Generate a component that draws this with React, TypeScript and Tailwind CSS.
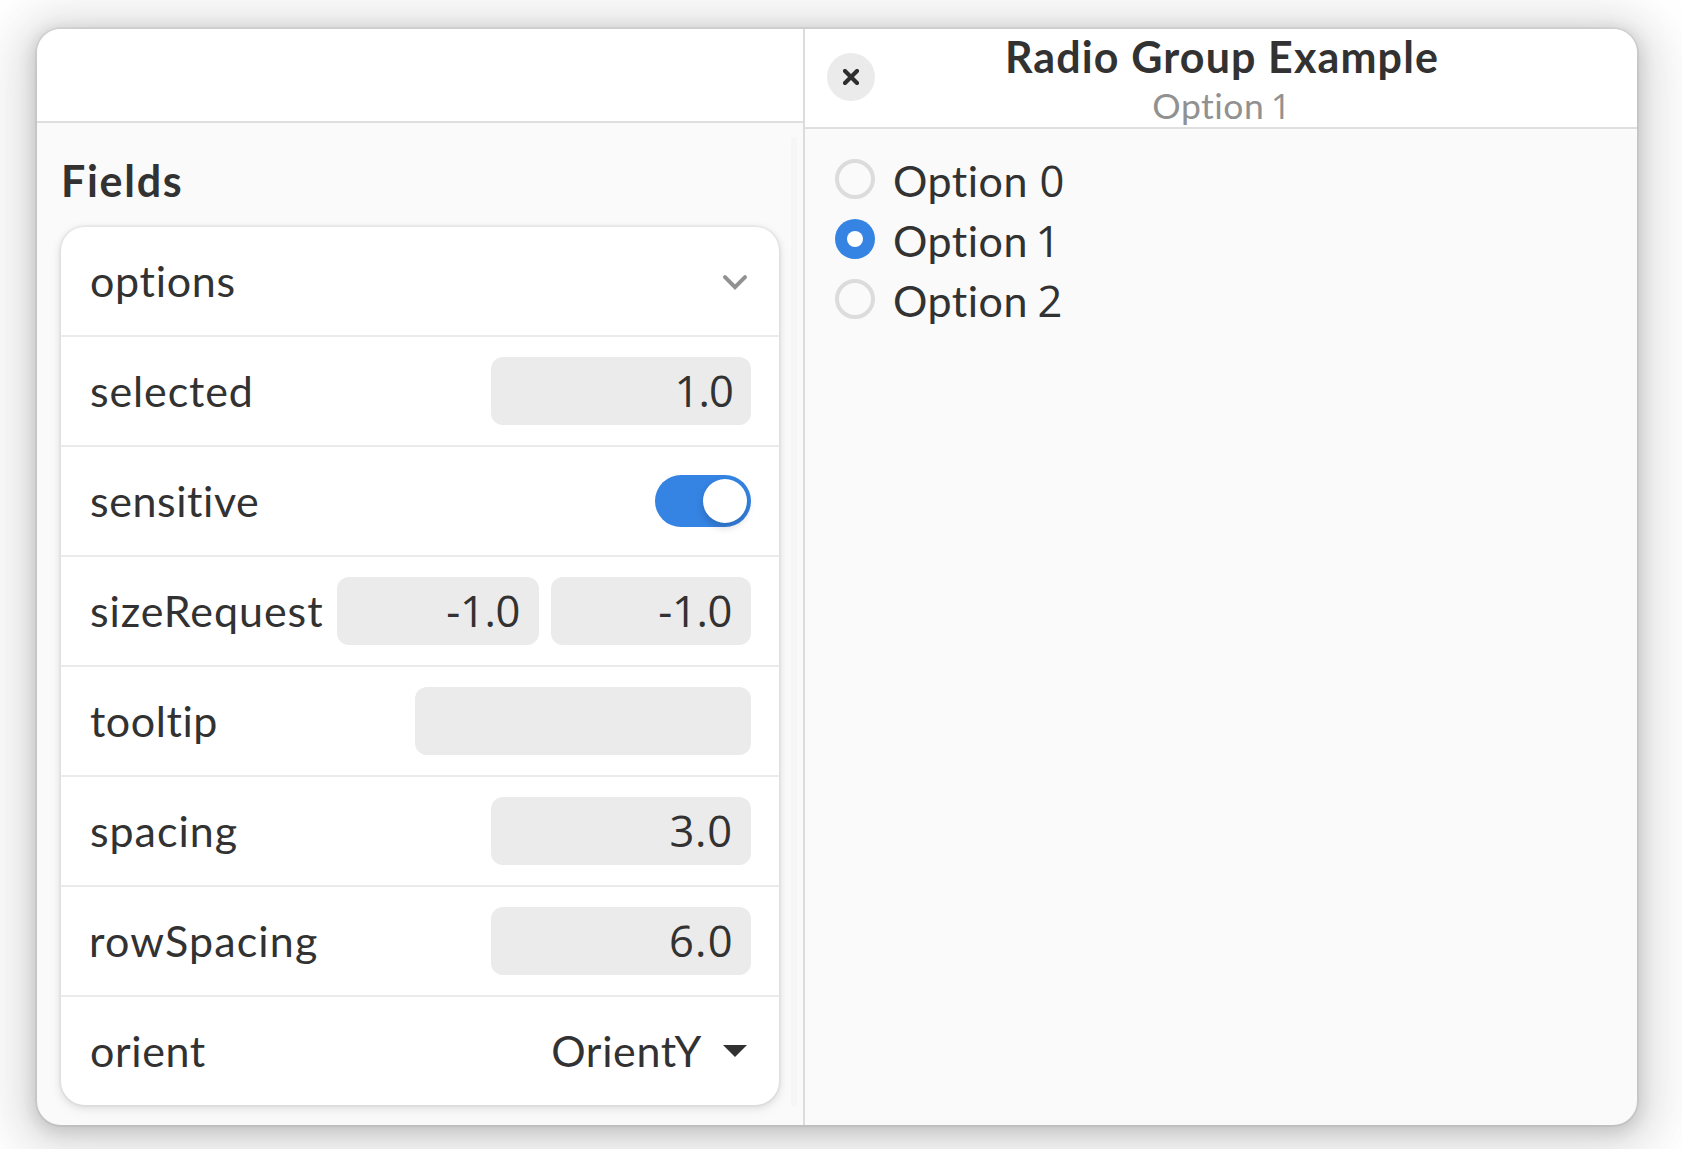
import type { ReactNode } from "react";

const LABEL = "font-[Lato,sans-serif] text-[43px] leading-[60px] whitespace-nowrap";
const DIGIT = "font-['Open_Sans',sans-serif] text-[43.5px]";

function Row({ label, className, children }: { label: string; className: string; children?: ReactNode }) {
  return (
    <div className="flex h-[110px] shrink-0 items-center border-b-2 border-[#ebebeb] pr-7 pl-[29px] last:h-[108px] last:border-b-0">
      <span className={`${LABEL} -mt-px ${className}`}>{label}</span>
      <div className="ml-auto flex items-center gap-3">{children}</div>
    </div>
  );
}

function Entry({ value, className, textClass = "" }: { value?: string; className: string; textClass?: string }) {
  return (
    <div className={`flex h-[68px] items-center justify-end rounded-xl bg-[#ebebeb] ${className}`}>
      {value && <span className={`${DIGIT} -mt-px leading-[60px] ${textClass}`}>{value}</span>}
    </div>
  );
}

function Radio({ digit, checked, className }: { digit: string; checked?: boolean; className: string }) {
  return (
    <div className="flex h-[60px] items-start">
      {checked ? (
        <span className="flex size-10 items-center justify-center rounded-full bg-[#3584e4]">
          <span className="size-4 rounded-full bg-white" />
        </span>
      ) : (
        <span className="size-10 rounded-full border-4 border-[#dcdcdc]" />
      )}
      <span className={`${LABEL} -mt-2 ml-[18px] tracking-[0.5px] ${className}`}>
        Option <span className={DIGIT}>{digit}</span>
      </span>
    </div>
  );
}

export default function App() {
  return (
    <div className="h-[1149px] w-[1682px] overflow-hidden bg-white pt-[29px] pl-[37px] text-[#323232]">
      <div className="flex h-[1096px] w-[1600px] rounded-[24px] bg-[#fafafa] shadow-[0_0_0_2px_rgba(0,0,0,0.05),0_4px_16px_4px_rgba(0,0,0,0.13),0_6px_40px_20px_rgba(0,0,0,0.09),0_12px_64px_32px_rgba(0,0,0,0.04)]">
        <section className="flex w-[766px] flex-col">
          <header className="h-[94px] shrink-0 rounded-tl-[24px] border-b-2 border-[#dfdfdf] bg-white" />
          <div className="flex min-h-0 flex-1 pl-6">
            <div className="flex w-[718px] flex-col pt-[26px]">
              <h2 className="h-[78px] font-[Lato,sans-serif] text-[43px] leading-[64px] font-bold tracking-[1.7px]">Fields</h2>
              <div className="flex flex-col rounded-[24px] bg-white shadow-[0_0_0_2px_rgba(0,0,0,0.03),0_2px_6px_2px_rgba(0,0,0,0.07),0_4px_12px_4px_rgba(0,0,0,0.03)]">
                <Row label="options" className="tracking-[0.71px]">
                  <svg className="mr-[2px]" width="28" height="28" viewBox="0 0 28 28" fill="none" stroke="#919191" strokeWidth="4" strokeLinecap="round" strokeLinejoin="miter">
                    <path d="M4 10.2 14 20.2 24 10.2" />
                  </svg>
                </Row>
                <Row label="selected" className="tracking-[0.87px]">
                  <Entry value="1.0" className="w-[260px] pr-[18px]" textClass="tracking-[-0.9px]" />
                </Row>
                <Row label="sensitive" className="tracking-[0.56px]">
                  <div className="flex h-[52px] w-24 items-center justify-end rounded-full bg-[#3584e4] p-1">
                    <span className="size-11 rounded-full bg-white shadow-[0_4px_8px_rgba(0,0,0,0.2)]" />
                  </div>
                </Row>
                <Row label="sizeRequest" className="tracking-[0.95px]">
                  <Entry value="-1.0" className="w-[202px] pr-[19px]" textClass="tracking-[-0.37px]" />
                  <Entry value="-1.0" className="w-[200px] pr-[19px]" textClass="tracking-[-0.37px]" />
                </Row>
                <Row label="tooltip" className="tracking-[0.55px]">
                  <Entry className="w-[336px]" />
                </Row>
                <Row label="spacing" className="tracking-[0.95px]">
                  <Entry value="3.0" className="w-[260px] pr-[18px]" textClass="tracking-[0.8px]" />
                </Row>
                <Row label="rowSpacing" className="-ml-px tracking-[1.15px]">
                  <Entry value="6.0" className="w-[260px] pr-[17px]" textClass="tracking-[1.3px]" />
                </Row>
                <Row label="orient" className="tracking-[0.61px]">
                  <span className={`${LABEL} -mt-px tracking-[0.66px]`}>OrientY</span>
                  <svg className="mr-1 ml-[9px]" width="24" height="12" viewBox="0 0 24 12" fill="#323232">
                    <path d="M0 0h24L12 12z" />
                  </svg>
                </Row>
              </div>
            </div>
            <div className="mt-[14px] ml-3 h-[970px] w-[6px] rounded-full bg-[#f6f6f6]" />
          </div>
        </section>
        <div className="w-[2px] shrink-0 bg-[#dcdcdc]" />
        <section className="flex w-[832px] flex-col">
          <header className="flex h-[100px] shrink-0 overflow-hidden rounded-tr-[24px] border-b-2 border-[#dfdfdf] bg-white pl-[22px]">
            <button className="mt-6 flex size-12 shrink-0 items-center justify-center rounded-full bg-[#ebebeb]">
              <svg width="16" height="16" viewBox="0 0 16 16" fill="none" stroke="#2f2f2f" strokeWidth="4.2" strokeLinecap="round">
                <path d="M2 2l12 12M14 2 2 14" />
              </svg>
            </button>
            <div className="flex h-[98px] flex-1 flex-col items-center pt-px pr-[68px]">
              <h1 className="h-[52px] font-[Lato,sans-serif] text-[43px] leading-[54px] font-bold tracking-[1.12px] whitespace-nowrap">Radio Group Example</h1>
              <p className="font-[Lato,sans-serif] text-[35.5px] leading-[46px] tracking-[0.5px] whitespace-nowrap text-[#919191] [word-spacing:-3px]">
                Option <span className="font-['Open_Sans',sans-serif]">1</span>
              </p>
            </div>
          </header>
          <div className="flex flex-col pt-[30px] pl-[30px]">
            <Radio digit="0" className="[word-spacing:0px]" />
            <Radio digit="1" className="[word-spacing:-4px]" checked />
            <Radio digit="2" className="[word-spacing:-2px]" />
          </div>
        </section>
      </div>
    </div>
  );
}
